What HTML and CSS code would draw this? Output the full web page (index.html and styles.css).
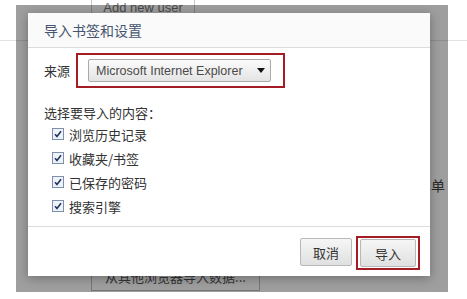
FILE: index.html
```html
<!DOCTYPE html>
<html lang="zh-CN">
<head>
    <meta charset="UTF-8">
    <title>导入书签和设置</title>
    <link rel="stylesheet" href="styles.css">
</head>
<body>

    <!-- Settings page behind the dialog -->
    <div class="page">
        <div class="user-btn">Add new user</div>
        <div class="rule"></div>
        <div class="side-note">单</div>
        <div class="import-btn">从其他浏览器导入数据...</div>

        <!-- Dimmed overlay + dialog -->
        <div class="overlay">
            <div class="dialog">
                <div class="dialog-title">导入书签和设置</div>

                <div class="dialog-body">
                    <div class="source-row">
                        <span class="label">来源</span>
                        <div class="mark">
                            <div class="select">
                                <span>Microsoft Internet Explorer</span>
                                <span class="arrow"></span>
                            </div>
                        </div>
                    </div>

                    <div class="section-label">选择要导入的内容：</div>

                    <div class="check-row">
                        <svg class="box" width="12" height="12" viewBox="0 0 12 12"><rect x="0.5" y="0.5" width="11" height="11" fill="#eef2f8" stroke="#7d8fab"/><path d="M3 6.2 L5 8.4 L9 3.2" fill="none" stroke="#23375d" stroke-width="1.6"/></svg>
                        <span>浏览历史记录</span>
                    </div>
                    <div class="check-row">
                        <svg class="box" width="12" height="12" viewBox="0 0 12 12"><rect x="0.5" y="0.5" width="11" height="11" fill="#eef2f8" stroke="#7d8fab"/><path d="M3 6.2 L5 8.4 L9 3.2" fill="none" stroke="#23375d" stroke-width="1.6"/></svg>
                        <span>收藏夹/书签</span>
                    </div>
                    <div class="check-row">
                        <svg class="box" width="12" height="12" viewBox="0 0 12 12"><rect x="0.5" y="0.5" width="11" height="11" fill="#eef2f8" stroke="#7d8fab"/><path d="M3 6.2 L5 8.4 L9 3.2" fill="none" stroke="#23375d" stroke-width="1.6"/></svg>
                        <span>已保存的密码</span>
                    </div>
                    <div class="check-row">
                        <svg class="box" width="12" height="12" viewBox="0 0 12 12"><rect x="0.5" y="0.5" width="11" height="11" fill="#eef2f8" stroke="#7d8fab"/><path d="M3 6.2 L5 8.4 L9 3.2" fill="none" stroke="#23375d" stroke-width="1.6"/></svg>
                        <span>搜索引擎</span>
                    </div>
                </div>

                <div class="dialog-footer">
                    <button class="btn">取消</button>
                    <div class="mark mark-btn">
                        <button class="btn btn-ok">导入</button>
                    </div>
                </div>
            </div>
        </div>
    </div>

</body>
</html>
```

FILE: styles.css
```css
body {
    margin: 0;
    padding: 0;
    background-color: #fff;
    font-family: "Noto Sans CJK SC", "Liberation Sans", sans-serif;
    font-size: 13px;
    color: #333;
}

/* Page behind the overlay */
.page {
    position: relative;
    width: 467px;
    height: 299px;
    overflow: hidden;
}

.user-btn {
    margin: -4px 0 0 91px;
    width: 102px;
    height: 23px;
    line-height: 23px;
    border: 1px solid #c8c8c8;
    border-top: none;
    text-align: center;
    font-family: "Liberation Sans", sans-serif;
    color: #777;
}

.rule {
    height: 1px;
    margin-top: 20px;
    background-color: #e2e2e2;
}

.side-note {
    margin-top: 136px;
    padding-right: 22px;
    text-align: right;
    font-size: 14px;
    line-height: 16px;
    color: #444;
}

.import-btn {
    margin: 70px 0 0 91px;
    width: 167px;
    height: 26px;
    line-height: 26px;
    border: 1px solid #bdbdbd;
    text-align: center;
    color: #555;
}

/* Overlay */
.overlay {
    position: absolute;
    left: 16px;
    top: 5px;
    width: 432px;
    height: 287px;
    box-sizing: border-box;
    padding: 8px 18px 16px 12px;
    background-color: rgba(0, 0, 0, 0.38);
}

.dialog {
    width: 402px;
    height: 263px;
    display: flex;
    flex-direction: column;
    background-color: #fff;
    box-shadow: 0 2px 10px rgba(0, 0, 0, 0.3);
}

.dialog-title {
    height: 34px;
    line-height: 34px;
    padding-left: 16px;
    background-color: #fafafa;
    border-bottom: 1px solid #dcdcdc;
    font-size: 14px;
    color: #45556f;
}

.dialog-body {
    flex: 1;
    padding: 5px 16px 6px;
}

.source-row {
    display: flex;
    align-items: center;
    height: 35px;
}

.label {
    margin-right: 6px;
    line-height: 18px;
}

/* red annotation frame */
.mark {
    border: 2px solid #a41c24;
    box-sizing: border-box;
}

.source-row .mark {
    width: 209px;
    height: 35px;
    padding: 4px 12px 0 10px;
}

.select {
    display: flex;
    align-items: center;
    justify-content: space-between;
    height: 21px;
    padding: 0 7px;
    border: 1px solid #aaa;
    border-radius: 2px;
    background: linear-gradient(#fbfbfb, #e4e4e4);
    font-family: "Liberation Sans", sans-serif;
    font-size: 12.5px;
    color: #4a4a4a;
}

.arrow {
    width: 0;
    height: 0;
    border-left: 4px solid transparent;
    border-right: 4px solid transparent;
    border-top: 5px solid #111;
    margin-right: -2px;
}

.section-label {
    margin-top: 16px;
    line-height: 18px;
}

.check-row {
    display: flex;
    align-items: center;
    height: 24px;
    padding-left: 8px;
    color: #333;
}

.check-row .box {
    margin-right: 5px;
    flex-shrink: 0;
}

.check-row:first-of-type {
    margin-top: 2px;
}

/* Footer */
.dialog-footer {
    display: flex;
    justify-content: flex-end;
    align-items: flex-start;
    height: 50px;
    padding: 11px 10px 0 0;
    box-sizing: border-box;
    border-top: 1px solid #dcdcdc;
}

.btn {
    height: 28px;
    padding: 0;
    border: 1px solid #b8b8b8;
    border-radius: 2px;
    background: linear-gradient(#f6f6f6, #e0e0e0);
    font-family: "Noto Sans CJK SC", sans-serif;
    font-size: 13px;
    color: #333;
    width: 52px;
}

.mark-btn {
    margin: -2px 0 0 4px;
    padding: 1px 2px;
}

.btn-ok {
    width: 56px;
}
```
